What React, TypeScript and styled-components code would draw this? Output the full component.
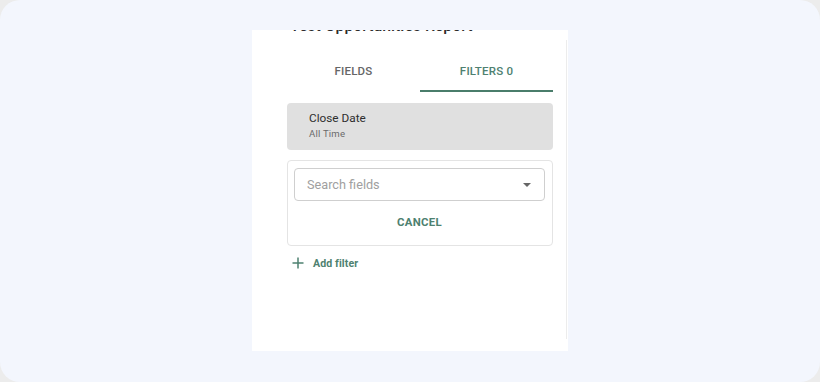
import React from "react";
import styled, { createGlobalStyle } from "styled-components";

const GREEN = "#4e8170";

const Global = createGlobalStyle`
  html, body { margin: 0; padding: 0; background: #ececec; }
  body { font-family: Roboto, "Noto Sans", Arial, sans-serif; }
  * { box-sizing: border-box; }
`;

const Frame = styled.div`
  width: 820px;
  height: 382px;
  border-radius: 20px;
  background: #f3f6fd;
  display: flex;
  justify-content: center;
  padding-top: 30px;
`;

const Panel = styled.div`
  position: relative;
  width: 316px;
  height: 321px;
  background: #ffffff;
  overflow: hidden;
  padding: 0 15px 0 35px;
  display: flex;
  flex-direction: column;

  &::after {
    content: "";
    position: absolute;
    right: 1px;
    top: 10px;
    bottom: 12px;
    width: 1px;
    background: #ececec;
  }
`;

const Title = styled.div`
  margin: -14px 0 0 3px;
  height: 20px;
  line-height: 20px;
  font-size: 15.8px;
  font-weight: 500;
  color: #2b2b2b;
  white-space: nowrap;
`;

const Tabs = styled.div`
  display: grid;
  grid-template-columns: 1fr 1fr;
  margin-top: 14px;
`;

const Tab = styled.div<{ $active?: boolean }>`
  height: 42px;
  display: flex;
  align-items: center;
  justify-content: center;
  padding-top: 1px;
  font-size: 11.5px;
  font-weight: 500;
  letter-spacing: 0.2px;
  text-transform: uppercase;
  color: ${(p) => (p.$active ? GREEN : "#666666")};
  border-bottom: 2px solid ${(p) => (p.$active ? "#4a7d6b" : "transparent")};
`;

const FilterCard = styled.div`
  margin-top: 11px;
  height: 47px;
  background: #e0e0e0;
  border-radius: 4px;
  padding: 8px 0 0 22px;
  display: flex;
  flex-direction: column;
`;

const CardTitle = styled.div`
  font-size: 11.8px;
  line-height: 15px;
  color: #2e2e2e;
`;

const CardSub = styled.div`
  font-size: 9.6px;
  line-height: 14px;
  margin-top: 1px;
  color: #6b6b6b;
  letter-spacing: 0.2px;
`;

const EditBox = styled.div`
  margin-top: 10px;
  height: 86px;
  border: 1px solid #e4e4e4;
  border-radius: 4px;
  padding: 7px 7px 0 6px;
  display: flex;
  flex-direction: column;
`;

const SearchField = styled.div`
  height: 33px;
  border: 1px solid #cfcfcf;
  border-radius: 4px;
  display: flex;
  align-items: center;
  padding: 0 13px 0 12px;
`;

const Placeholder = styled.span`
  flex: 1;
  font-size: 12.7px;
  color: #a0a0a0;
`;

const Caret = styled.svg`
  width: 8px;
  height: 4px;
  display: block;
`;

const CancelButton = styled.div`
  height: 42px;
  display: flex;
  align-items: center;
  justify-content: center;
  font-size: 11.4px;
  font-weight: 700;
  letter-spacing: 0.3px;
  color: ${GREEN};
`;

const AddRow = styled.div`
  margin-top: 10px;
  margin-left: 5px;
  height: 14px;
  display: flex;
  align-items: center;
  gap: 9px;
  color: ${GREEN};
`;

const AddLabel = styled.span`
  font-size: 10.6px;
  font-weight: 700;
  letter-spacing: 0.1px;
`;

export default function App() {
  return (
    <>
      <Global />
      <Frame>
        <Panel>
          <Title>Test Opportunities Report</Title>
          <Tabs>
            <Tab>Fields</Tab>
            <Tab $active>Filters 0</Tab>
          </Tabs>
          <FilterCard>
            <CardTitle>Close Date</CardTitle>
            <CardSub>All Time</CardSub>
          </FilterCard>
          <EditBox>
            <SearchField>
              <Placeholder>Search fields</Placeholder>
              <Caret viewBox="0 0 8 4">
                <path d="M0 0 L8 0 L4 4 Z" fill="#666" />
              </Caret>
            </SearchField>
            <CancelButton>CANCEL</CancelButton>
          </EditBox>
          <AddRow>
            <svg width="12" height="12" viewBox="0 0 12 12">
              <path d="M6 0.5 V11.5 M0.5 6 H11.5" stroke={GREEN} strokeWidth="1.5" />
            </svg>
            <AddLabel>Add filter</AddLabel>
          </AddRow>
        </Panel>
      </Frame>
    </>
  );
}
